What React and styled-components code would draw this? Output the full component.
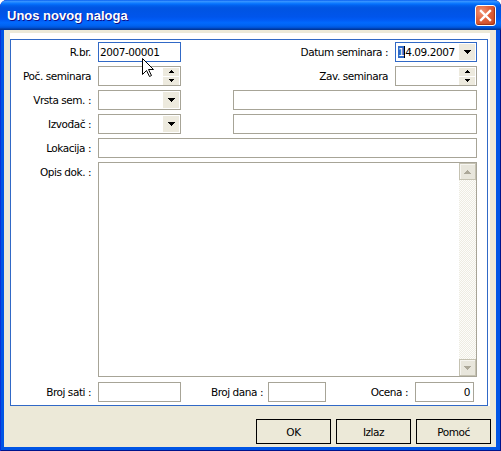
import React from 'react';
import styled, { createGlobalStyle } from 'styled-components';

const GlobalStyle = createGlobalStyle`
  html, body {
    margin: 0;
    padding: 0;
    background: #fff;
  }

  body {
    font-family: "DejaVu Sans", Verdana, sans-serif;
    font-size: 10.5px;
    letter-spacing: -0.45px;
    color: #000;
  }
`;

const DownArrow = ({ color = '#000' }) => (
  <svg width="7" height="4" viewBox="0 0 7 4" shapeRendering="crispEdges">
    <path d="M0 0h7v1H0z M1 1h5v1H1z M2 2h3v1H2z M3 3h1v1H3z" fill={color} />
  </svg>
);

const UpArrow = ({ color = '#000' }) => (
  <svg width="7" height="4" viewBox="0 0 7 4" shapeRendering="crispEdges">
    <path d="M3 0h1v1H3z M2 1h3v1H2z M1 2h5v1H1z M0 3h7v1H0z" fill={color} />
  </svg>
);

const SpinUp = () => (
  <svg width="5" height="3" viewBox="0 0 5 3" shapeRendering="crispEdges">
    <path d="M2 0h1v1H2z M1 1h3v1H1z M0 2h5v1H0z" fill="#000" />
  </svg>
);

const SpinDown = () => (
  <svg width="5" height="3" viewBox="0 0 5 3" shapeRendering="crispEdges">
    <path d="M0 0h5v1H0z M1 1h3v1H1z M2 2h1v1H2z" fill="#000" />
  </svg>
);

const App = () => (
  <>
    <GlobalStyle />
    <Window>
      <TitleBar>
        <Title>Unos novog naloga</Title>
        <CloseButton>
          <svg width="13" height="13" viewBox="0 0 13 13">
            <path d="M2 2L11 11M11 2L2 11" stroke="#fff" strokeWidth="2.4" strokeLinecap="square" />
          </svg>
        </CloseButton>
      </TitleBar>
      <Client>
        <Sheet>
          <Frame>
            <Row>
              <Label>R.br.</Label>
              <TextBox $w={83} $focused>2007-00001</TextBox>
              <Spacer />
              <SideLabel>Datum seminara :</SideLabel>
              <TextBox $w={82} $focused>
                <Value>
                  <Selected>1</Selected>4.09.2007
                </Value>
                <DropButton>
                  <DownArrow />
                </DropButton>
              </TextBox>
            </Row>
            <Row>
              <Label>Poč. seminara</Label>
              <TextBox $w={83}>
                <Value />
                <Spin>
                  <SpinButton><SpinUp /></SpinButton>
                  <SpinButton><SpinDown /></SpinButton>
                </Spin>
              </TextBox>
              <Spacer />
              <SideLabel>Zav. seminara</SideLabel>
              <TextBox $w={82}>
                <Value />
                <Spin>
                  <SpinButton><SpinUp /></SpinButton>
                  <SpinButton><SpinDown /></SpinButton>
                </Spin>
              </TextBox>
            </Row>
            <Row>
              <Label>Vrsta sem. :</Label>
              <TextBox $w={83}>
                <Value />
                <DropButton>
                  <DownArrow />
                </DropButton>
              </TextBox>
              <TextBox $grow $offset={52} />
            </Row>
            <Row>
              <Label>Izvođač :</Label>
              <TextBox $w={83}>
                <Value />
                <DropButton>
                  <DownArrow />
                </DropButton>
              </TextBox>
              <TextBox $grow $offset={52} />
            </Row>
            <Row>
              <Label>Lokacija :</Label>
              <TextBox $grow />
            </Row>
            <Row $fill>
              <Label>Opis dok. :</Label>
              <Memo>
                <MemoText />
                <ScrollBar>
                  <ScrollButton><UpArrow color="#aca899" /></ScrollButton>
                  <Track />
                  <ScrollButton><DownArrow color="#aca899" /></ScrollButton>
                </ScrollBar>
              </Memo>
            </Row>
            <Row $last>
              <Label>Broj sati :</Label>
              <TextBox $w={83} />
              <MidLabel>Broj dana :</MidLabel>
              <TextBox $w={58} />
              <Spacer />
              <SideLabel>Ocena :</SideLabel>
              <TextBox $w={59} $right>0</TextBox>
              <RowEnd />
            </Row>
          </Frame>
        </Sheet>
        <ButtonBar>
          <Button type="button">OK</Button>
          <Button type="button">Izlaz</Button>
          <Button type="button">Pomoć</Button>
        </ButtonBar>
      </Client>
      <Cursor width="13" height="20" viewBox="0 0 13 20">
        <path
          d="M0.5 0.5V16.5L4.5 12.5L7.5 18.5L9.5 17.5L6.5 11.5H11.5Z"
          fill="#fff"
          stroke="#000"
          strokeWidth="1"
          strokeLinejoin="miter"
        />
      </Cursor>
    </Window>
  </>
);

export default App;

const Window = styled.div`
  position: relative;
  width: 501px;
  height: 451px;
  box-sizing: border-box;
  display: flex;
  flex-direction: column;
  padding: 0 5px 4px 4px;
  background: #0055e5;
  box-shadow: inset 1px 0 #0831d9, inset -1px 0 #00138c, inset 0 -1px #00138c;
  border-radius: 7px 7px 0 0;
  overflow: hidden;
`;

const TitleBar = styled.div`
  height: 30px;
  margin: 0 -5px 0 -4px;
  padding: 0 5px 0 7px;
  display: flex;
  align-items: center;
  justify-content: space-between;
  border-radius: 7px 7px 0 0;
  background: linear-gradient(
    #0058ee 0%,
    #3a93ff 4%,
    #288eff 7%,
    #127dff 10%,
    #036ffc 14%,
    #0262ee 18%,
    #0057e5 24%,
    #0054e3 30%,
    #0055eb 56%,
    #005bf5 66%,
    #026afe 76%,
    #0062ef 86%,
    #0052d6 92%,
    #0040ab 96%,
    #003092 100%
  );
`;

const Title = styled.div`
  font-family: "Liberation Sans", Arial, sans-serif;
  font-weight: bold;
  font-size: 13px;
  letter-spacing: 0;
  color: #fff;
  text-shadow: 1px 1px #0f1089;
  padding-top: 1px;
`;

const CloseButton = styled.div`
  width: 21px;
  height: 21px;
  box-sizing: border-box;
  border: 1px solid #fff;
  border-radius: 3px;
  display: flex;
  align-items: center;
  justify-content: center;
  background: radial-gradient(circle at 30% 30%, #f39576 0%, #e0603a 45%, #c9461f 100%);
  box-shadow: inset -1px -1px 1px #a33314;
  margin-top: 1px;
`;

const Client = styled.div`
  flex: 1;
  background: #ece9d8;
  display: flex;
  flex-direction: column;
`;

const Sheet = styled.div`
  margin: 3px 0 0 6px;
  width: 480px;
  box-sizing: border-box;
  padding: 6px 2px 0 0;
  background: #fff;
`;

const Frame = styled.div`
  height: 367px;
  box-sizing: border-box;
  border: 1px solid #3169c6;
  padding: 2px 10px 3px 0;
  display: flex;
  flex-direction: column;
  gap: 4px;
`;

const Row = styled.div`
  display: flex;
  align-items: flex-start;
  height: ${(p) => (p.$fill ? 'auto' : '20px')};
  flex: ${(p) => (p.$fill ? 1 : 'none')};
  margin-top: ${(p) => (p.$last ? '1px' : '0')};
`;

const Label = styled.div`
  width: 80px;
  margin-right: 7px;
  flex-shrink: 0;
  text-align: right;
  line-height: 20px;
  white-space: nowrap;
`;

const SideLabel = styled.div`
  margin-right: 7px;
  line-height: 20px;
  white-space: nowrap;
`;

const MidLabel = styled.div`
  width: 82px;
  margin-right: 5px;
  flex-shrink: 0;
  text-align: right;
  line-height: 20px;
  white-space: nowrap;
`;

const Spacer = styled.div`
  flex: 1;
`;

const RowEnd = styled.div`
  width: 3px;
`;

const TextBox = styled.div`
  display: flex;
  align-items: stretch;
  box-sizing: border-box;
  height: 20px;
  width: ${(p) => (p.$w ? `${p.$w}px` : 'auto')};
  flex: ${(p) => (p.$grow ? 1 : 'none')};
  margin-left: ${(p) => p.$offset || 0}px;
  border: 1px solid ${(p) => (p.$focused ? '#3169c6' : '#a7a497')};
  background: #fff;
  padding: ${(p) => (p.$right ? '0 3px 0 2px' : '0 0 0 1px')};
  justify-content: ${(p) => (p.$right ? 'flex-end' : 'flex-start')};
  line-height: 18px;
  white-space: nowrap;
  overflow: hidden;
`;

const Value = styled.div`
  flex: 1;
  padding-left: 1px;
`;

const Selected = styled.span`
  background: #3169c6;
  color: #fff;
  border-right: 1px solid #000;
`;

const DropButton = styled.div`
  width: 16px;
  margin: 1px;
  background: #edeade;
  display: flex;
  align-items: center;
  justify-content: center;
`;

const Spin = styled.div`
  width: 16px;
  margin: 0 1px;
  display: flex;
  flex-direction: column;
  justify-content: center;
  gap: 1px;
`;

const SpinButton = styled.div`
  height: 8px;
  background: #edeade;
  display: flex;
  align-items: center;
  justify-content: center;
`;

const Memo = styled.div`
  flex: 1;
  align-self: stretch;
  display: flex;
  border: 1px solid #a7a497;
  background: #fff;
`;

const MemoText = styled.div`
  flex: 1;
`;

const ScrollBar = styled.div`
  width: 17px;
  display: flex;
  flex-direction: column;
`;

const ScrollButton = styled.div`
  height: 17px;
  box-sizing: border-box;
  border: 1px solid #c5c2b2;
  background: #e8e6dc;
  box-shadow: inset 1px 1px #f6f5f0;
  display: flex;
  align-items: center;
  justify-content: center;
`;

const Track = styled.div`
  flex: 1;
  background: repeating-conic-gradient(#fdfdfb 0 25%, #eeece2 0 50%) 0 0 / 2px 2px;
`;

const ButtonBar = styled.div`
  display: flex;
  justify-content: flex-end;
  gap: 5px;
  padding-right: 5px;
  margin-top: 13px;
`;

const Button = styled.button`
  width: 75px;
  height: 25px;
  box-sizing: border-box;
  border: 1px solid #000;
  background: #ece9d8;
  font-family: "DejaVu Sans", Verdana, sans-serif;
  font-size: 10.5px;
  letter-spacing: -0.45px;
  color: #000;
  padding: 0;
`;

const Cursor = styled.svg`
  position: absolute;
  left: 142px;
  top: 58px;
`;
